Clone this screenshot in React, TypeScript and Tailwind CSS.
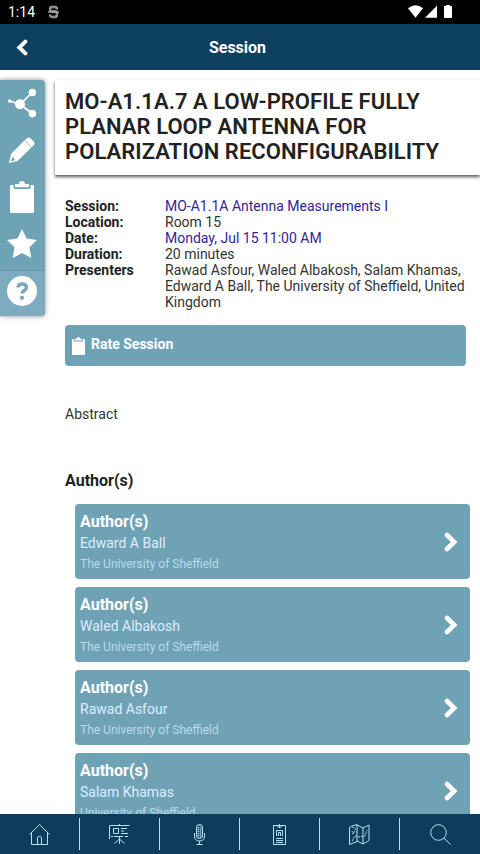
import type { ReactNode } from "react";

function Clipboard({ className }: { className: string }) {
  return (
    <svg viewBox="0 0 24 32" className={className} fill="currentColor" preserveAspectRatio="none">
      <path d="M1.200 4H3.500v2.500Q3.500 8 5 8h14q1.500 0 1.500-1.500V4h2.300Q24 4 24 5.200v25.600q0 1.200-1.200 1.200H1.200Q0 32 0 30.800V5.200Q0 4 1.200 4Z" />
      <path d="M5 3H9q.3-3 3-3t3 3h4v3.300H5Z" />
    </svg>
  );
}

function Chevron({ className, left = false }: { className: string; left?: boolean }) {
  return (
    <svg viewBox="0 0 14 20" className={className} fill="none" stroke="white" strokeWidth="4.600" strokeLinecap="round">
      <path d={left ? "M11 3 3.800 10 11 17" : "M3 3 10.200 10 3 17"} />
    </svg>
  );
}

function StatusBar() {
  return (
    <div className="flex h-6 shrink-0 items-center bg-black text-white">
      <span className="ml-2 w-[40px] text-[14px] leading-none">1:14</span>
      <svg width="11" height="14" viewBox="0 0 11 14" fill="none">
        <path d="M9 4.500V4Q9 2 7 2H4Q2 2 2 4.200T4 6.500h3.200Q9 6.500 9 9.200T7 12H4q-2 0-2-2.500" stroke="#aaa" strokeWidth="2.400" />
        <path d="M9 4Q9 2 7 2H4Q2 2 2 4.200T4 6.500M7.200 6.500Q9 6.500 9 9.200T7 12H4q-2 0-2-2" stroke="#555" strokeWidth=".6" />
        <path d="M0 7h11" stroke="#aaa" strokeWidth="1.300" />
      </svg>
      <svg className="ml-auto mr-[27px]" width="46" height="14" viewBox="0 0 46 14" fill="white">
        <path d="M1 3.200q7.500-5.800 15 0L8.500 12.800Z" />
        <path d="M30 .8v12H18Z" />
        <path d="M37 1h2V0h4v1h1q1 0 1 1v10q0 1-1 1h-6q-1 0-1-1V2Z" />
      </svg>
    </div>
  );
}

function SideTools() {
  return (
    <nav className="mt-2.5 flex h-[236px] w-[45px] shrink-0 flex-col overflow-hidden rounded-r-[4px] bg-[#6ea2b5] pr-px text-white shadow-[0_0_5px_rgba(0,0,0,0.45)]">
      <div className="flex h-[46px] items-center justify-center">
        <svg width="30" height="30" viewBox="0 0 30 30" fill="white" stroke="white">
          <path d="M2.500 13 13 16.300 25.300 4.500M13 16.300 25.300 25.500" strokeWidth="1.700" fill="none" />
          <circle cx="13" cy="16.300" r="5" stroke="none" />
          <circle cx="25.400" cy="4.500" r="3.700" stroke="none" />
          <circle cx="25.400" cy="25.600" r="3.800" stroke="none" />
          <circle cx="2.600" cy="13" r="1.700" stroke="none" />
        </svg>
      </div>
      <div className="flex h-[47px] items-center justify-center">
        <svg width="26" height="26" viewBox="0 0 26 26" fill="white">
          <path d="M17.500 1.500q2-2 4.200 0l2.800 2.800q2 2.200 0 4.200L22.700 10.300 15.700 3.300Z" />
          <path d="m15.400 3.600 7 7L8.500 24 0 26 2 17ZM3.300 20 2 24.300l3.800-1q0-2.300-2.500-3.300Z" fillRule="evenodd" />
        </svg>
      </div>
      <div className="flex h-[47px] items-center justify-center">
        <Clipboard className="h-[32px] w-[24px]" />
      </div>
      <div className="flex h-[47px] items-center justify-center">
        <svg width="30" height="29" viewBox="0 0 30 29" fill="white">
          <path d="m15 0 4.600 9.500L30 11l-7.500 7.300L24.300 29 15 24l-9.300 5 1.800-10.700L0 11l10.400-1.500Z" />
        </svg>
      </div>
      <div className="-mr-px mt-[3px] flex h-[46px] items-start border-t border-[#6598af] bg-[#7eabbf] pl-[7px] pt-[5px]">
        <svg width="30" height="30" viewBox="0 0 30 30">
          <circle cx="15" cy="15" r="15" fill="white" />
          <path d="M11 11.500q.2-3.500 4.200-3.500T19.500 11.500c0 3-4.500 3-4.500 6" fill="none" stroke="#7ba6bd" strokeWidth="3.500" />
          <circle cx="15" cy="21.800" r="2.100" fill="#7ba6bd" />
        </svg>
      </div>
    </nav>
  );
}

function Detail({ label, link = false, children }: { label: string; link?: boolean; children: ReactNode }) {
  return (
    <div className="flex">
      <dt className="w-[100px] shrink-0 font-bold">{label}</dt>
      <dd className={link ? "text-[#33239a]" : "text-[#333]"}>{children}</dd>
    </div>
  );
}

const authors = [
  ["Edward A Ball", "The University of Sheffield"],
  ["Waled Albakosh", "The University of Sheffield"],
  ["Rawad Asfour", "The University of Sheffield"],
  ["Salam Khamas", "University of Sheffield"],
];

function Author({ name, school }: { name: string; school: string }) {
  return (
    <li className="flex h-[75px] shrink-0 items-center justify-between rounded-[4px] bg-[#70a2b6] pl-[5px] pr-3">
      <div className="flex flex-col self-start pt-2">
        <strong className="text-[16px] leading-[20px] text-white">Author(s)</strong>
        <span className="mt-[2px] text-[14px] leading-[18px] text-[#dcecff]">{name}</span>
        <span className="mt-[4px] text-[12px] leading-[16px] text-[#b9d9ed]">{school}</span>
      </div>
      <Chevron className="h-5 w-[14px]" />
    </li>
  );
}

const tabs: ReactNode[] = [
  <g key="home"><path d="M.5 10.500 10.500.5l10 10M2.500 8.500v12h16v-12M8.500 20.500v-7q0-1 2-1t2 1v7" /></g>,
  <g key="talks">
    <path d="M.5 15V1.500h20M10.500 0v1.500M4.500 4.500h5v5h-5ZM12 4.500h6M12 7h3M12 9.500h7M2 12.500h2M5 12.500h9M16 12.500h3M10.500 13v7M10.500 15l-5 4.500M10.500 15l5 4.500" />
  </g>,
  <g key="mic">
    <rect x="7.500" y=".5" width="6" height="14" rx="3" />
    <path d="M5.500 9v3q0 5 5 5t5-5V9M10.500 17v3.500M7.500 20.500h6" />
    <path d="M7 4h7M7 6h7M7 8h7M7 10h7M7 12h7M9 1v13M11 1v13M13 2v12" strokeDasharray="1 1" />
  </g>,
  <g key="badge">
    <path d="M4.500 1.500h12v19h-12ZM7.500 1.500l2 2h2l2-2M10.500 0v4M7.500 12V6.500h6V12M9.500 12V8.500h2V12M7 14.500h7M7 16.500h7M7 18.500h7" />
  </g>,
  <g key="map">
    <path d="M.5 3.500 3 2l5-1.500v17L.5 20.500ZM8 1l6 3v16l-6-3M14 4l6-3v15.500L14 20" />
    <path d="M3 3q5 1 3 4t-3 0M3 10l3-2M3 17l3-5 4 1 6-1 2-6" strokeDasharray="2 1" />
  </g>,
  <g key="search"><circle cx="8.500" cy="8.500" r="7.800" /><path d="m14 14 6.500 6.500" /></g>,
];

export default function App() {
  return (
    <div className="flex h-[854px] w-[480px] flex-col overflow-hidden bg-white font-[Roboto,sans-serif] text-[#222]">
      <StatusBar />
      <header className="flex h-[46px] shrink-0 items-center bg-[#0d405f] text-white">
        <Chevron left className="ml-[15px] h-[17px] w-[14px]" />
        <h1 className="flex-1 pr-[34px] pt-px text-center text-[16px] font-bold">Session</h1>
      </header>
      <div className="flex h-[744px] shrink-0 overflow-hidden">
        <SideTools />
        <main className="ml-2.5 flex min-w-0 flex-1 flex-col">
          <section className="mt-2.5 h-[95px] shrink-0 pl-2.5 pt-[9px] shadow-[0_2px_3px_rgba(0,0,0,0.65)]">
            <h2 className="w-[390px] text-[22px] font-semibold leading-[25px] tracking-[0.05px]">
              MO-A1.1A.7 A LOW-PROFILE FULLY PLANAR LOOP ANTENNA FOR POLARIZATION RECONFIGURABILITY
            </h2>
          </section>
          <dl className="ml-2.5 mt-[23px] w-[403px] text-[14px] leading-4">
            <Detail label="Session:" link>MO-A1.1A Antenna Measurements I</Detail>
            <Detail label="Location:">Room 15</Detail>
            <Detail label="Date:" link>Monday, Jul 15 11:00 AM</Detail>
            <Detail label="Duration:">20 minutes</Detail>
            <Detail label="Presenters">
              Rawad Asfour, Waled Albakosh, Salam Khamas, Edward A Ball, The University of Sheffield, United Kingdom
            </Detail>
          </dl>
          <button className="ml-2.5 mt-[15px] flex h-[41px] w-[401px] shrink-0 items-center rounded-[4px] bg-[#70a2b6] pl-[7px] text-[14px] font-bold text-white">
            <Clipboard className="h-[18px] w-[13px]" />
            <span className="mb-[3px] ml-1.5">Rate Session</span>
          </button>
          <p className="ml-2.5 mt-[38px] text-[14px] leading-5 text-[#333]">Abstract</p>
          <h3 className="ml-2.5 mt-[47px] text-[16px] font-bold leading-5">Author(s)</h3>
          <ul className="ml-5 mr-2.5 mt-[13px] flex flex-col gap-2">
            {authors.map(([name, school]) => (
              <Author key={name} name={name} school={school} />
            ))}
          </ul>
        </main>
      </div>
      <footer className="grid h-10 shrink-0 grid-cols-6 items-center bg-[#0c3e5c]">
        {tabs.map((icon, i) => (
          <div key={i} className={`flex h-8 items-center justify-center ${i < 5 ? "border-r border-[#b6deef]" : ""}`}>
            <svg width="21" height="21" viewBox="0 0 21 21" fill="none" stroke="#b8dfef" strokeWidth="1">
              {icon}
            </svg>
          </div>
        ))}
      </footer>
    </div>
  );
}
